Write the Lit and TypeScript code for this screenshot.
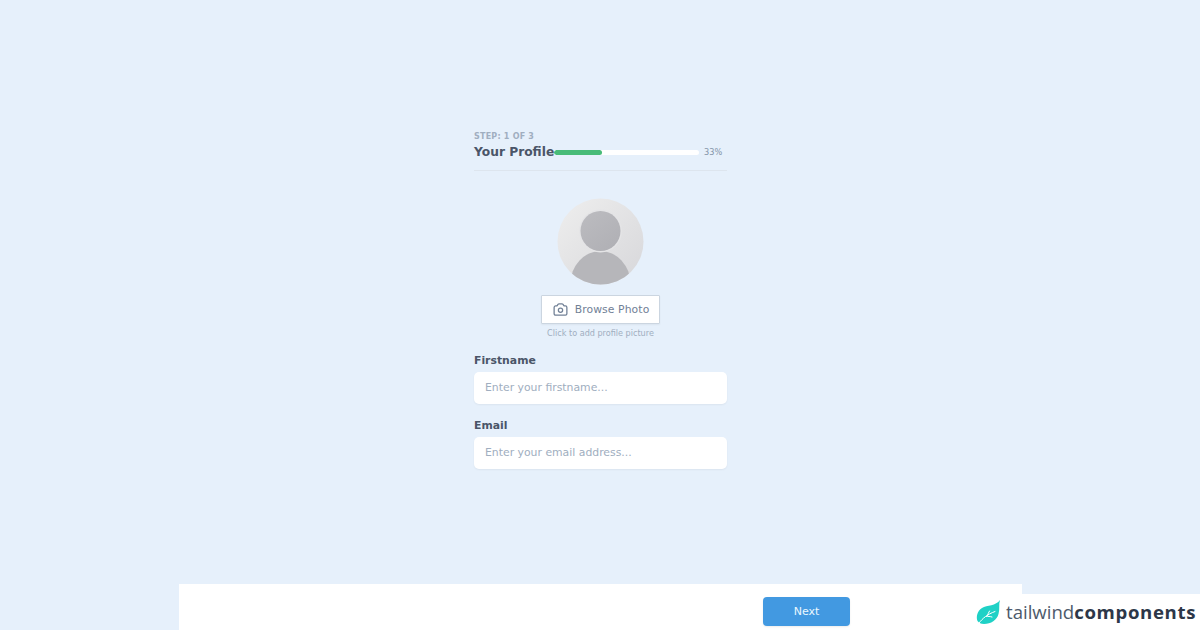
import { LitElement, html, css, svg } from "lit";
import { customElement } from "lit/decorators.js";

@customElement("app-root")
export class AppRoot extends LitElement {
  static styles = css`
    :host {
      display: block;
      width: 1200px;
      height: 630px;
      overflow: hidden;
      position: relative;
      background: #e6f0fb;
      font-family: "DejaVu Sans", sans-serif;
    }
    .page {
      width: 843px;
      height: 630px;
      margin-left: 179px;
      display: flex;
      flex-direction: column;
    }
    .main {
      flex: 1;
      width: 253px;
      margin: 0 auto;
      padding-top: 131px;
      box-sizing: border-box;
    }
    .head {
      height: 40px;
      box-sizing: border-box;
      border-bottom: 1px solid #dde5ee;
    }
    .step {
      font-size: 8px;
      line-height: 11px;
      font-weight: 700;
      letter-spacing: 0.22px;
      color: #a0aec0;
      text-transform: uppercase;
    }
    .row {
      display: flex;
      align-items: center;
      margin-top: 2px;
      height: 16px;
    }
    .title {
      font-size: 12.25px;
      line-height: 16px;
      font-weight: 700;
      color: #4a5568;
      white-space: nowrap;
      width: 80px;
    }
    .track {
      width: 145px;
      height: 5px;
      border-radius: 3px;
      background: #fff;
      overflow: hidden;
    }
    .fill {
      height: 100%;
      border-radius: 3px;
      background: #48bb78;
    }
    .pct {
      margin-left: 5px;
      font-size: 8.2px;
      color: #8494a8;
    }
    .photo {
      display: flex;
      flex-direction: column;
      align-items: center;
      margin-top: 27px;
    }
    .avatar {
      display: block;
      width: 87px;
      height: 87px;
    }
    .browse {
      box-sizing: border-box;
      width: 119px;
      height: 29px;
      margin-top: 10px;
      display: flex;
      align-items: center;
      justify-content: center;
      gap: 6px;
      background: #fff;
      border: 1px solid #cbd5e0;
      border-radius: 1px;
      box-shadow: 0 1px 2px rgba(0, 0, 0, 0.05);
      color: #718096;
      font-size: 10.8px;
      letter-spacing: 0.1px;
    }
    .browse svg {
      width: 17px;
      height: 17px;
      display: block;
    }
    .hint {
      margin-top: 3px;
      font-size: 8.1px;
      line-height: 12px;
      color: #a0aec0;
    }
    .field + .field {
      margin-top: 14px;
    }
    .photo + .field {
      margin-top: 14px;
    }
    .label {
      display: block;
      height: 15px;
      font-size: 10.85px;
      line-height: 15px;
      font-weight: 700;
      color: #4a5568;
      margin-bottom: 4px;
    }
    .input {
      display: block;
      box-sizing: border-box;
      width: 253px;
      height: 32px;
      padding: 0 11px 2px;
      border: 0;
      border-radius: 5px;
      background: #fff;
      box-shadow: 0 1px 2px rgba(0, 0, 0, 0.05);
      font: 10.85px "DejaVu Sans", sans-serif;
      color: #4a5568;
      outline: none;
    }
    .input::placeholder {
      color: #a0aec0;
      opacity: 1;
    }
    .bar {
      height: 46px;
      background: #fff;
      display: flex;
      justify-content: flex-end;
      padding: 13px 172px 0 0;
      box-sizing: border-box;
    }
    .next {
      box-sizing: border-box;
      width: 87px;
      height: 29px;
      border: 0;
      border-radius: 4px;
      background: #4299e1;
      color: #ebf8ff;
      font: 11px "DejaVu Sans", sans-serif;
      box-shadow: 0 1px 2px rgba(0, 0, 0, 0.08);
    }
    .brand {
      position: absolute;
      right: 0;
      bottom: 0;
      width: 240px;
      height: 36px;
      background: #fff;
      border-radius: 4px 0 0 0;
      display: flex;
      align-items: center;
      padding: 0 0 0 16px;
      box-sizing: border-box;
      gap: 6px;
    }
    .brand svg {
      width: 24px;
      height: 26px;
      display: block;
      flex: none;
    }
    .word {
      font-family: "Open Sans", sans-serif;
      font-size: 18.6px;
      line-height: 26px;
      color: #4d5a6b;
      white-space: nowrap;
    }
    .word b {
      font-weight: 700;
      letter-spacing: 0.65px;
      color: #2d3748;
    }
  `;

  private avatar() {
    return svg`
      <svg class="avatar" viewBox="0 0 87 87" xmlns="http://www.w3.org/2000/svg">
        <defs>
          <linearGradient id="bg" x1="0.1" y1="0.1" x2="0.9" y2="0.9">
            <stop offset="0" stop-color="#ececec"/>
            <stop offset="1" stop-color="#d9d9dc"/>
          </linearGradient>
          <linearGradient id="fg" x1="0" y1="0" x2="0.8" y2="1">
            <stop offset="0" stop-color="#bcbcc0"/>
            <stop offset="1" stop-color="#b0b0b5"/>
          </linearGradient>
          <clipPath id="c"><circle cx="43.5" cy="43.5" r="43"/></clipPath>
        </defs>
        <circle cx="43.5" cy="43.5" r="43" fill="url(#bg)"/>
        <g clip-path="url(#c)">
          <ellipse cx="43.5" cy="86" rx="30" ry="33" fill="#b6b6ba"/>
          <circle cx="43.5" cy="33" r="21.4" fill="#e4e4e6"/>
          <circle cx="43.5" cy="33" r="20" fill="url(#fg)"/>
        </g>
      </svg>`;
  }

  render() {
    return html`
      <div class="page">
        <div class="main">
          <div class="head">
            <div class="step">Step: 1 of 3</div>
            <div class="row">
              <div class="title">Your Profile</div>
              <div class="track"><div class="fill" style="width:33%"></div></div>
              <div class="pct">33%</div>
            </div>
          </div>
          <div class="photo">
            ${this.avatar()}
            <div class="browse">
              <svg viewBox="0 0 24 24" fill="none" stroke="#718096" stroke-width="1.8" stroke-linecap="round" stroke-linejoin="round">
                <path d="M3 9a2 2 0 0 1 2-2h.93a2 2 0 0 0 1.66-.89l.82-1.22A2 2 0 0 1 10.07 4h3.86a2 2 0 0 1 1.66.89l.82 1.22a2 2 0 0 0 1.66.89H19a2 2 0 0 1 2 2v9a2 2 0 0 1-2 2H5a2 2 0 0 1-2-2V9z"/>
                <circle cx="12" cy="13" r="3"/>
              </svg>
              <span>Browse Photo</span>
            </div>
            <div class="hint">Click to add profile picture</div>
          </div>
          <div class="field">
            <label class="label">Firstname</label>
            <input class="input" placeholder="Enter your firstname..." />
          </div>
          <div class="field">
            <label class="label">Email</label>
            <input class="input" placeholder="Enter your email address..." />
          </div>
        </div>
        <div class="bar"><button class="next">Next</button></div>
      </div>
      <div class="brand">
        <svg viewBox="0 0 24 26">
          <path d="M24 1C22.5 5 24 10 22.5 15C21 21 15 25 8 25C5 25 3 24 1.5 22C0 18 1 12 6 9C11 6 20 7 24 1Z" fill="#1fd1c6"/>
          <path d="M3 24C7 19 11 15.5 19 12.5M10.5 17.5C12 17.2 14 17.4 16 18M11.5 16.5C12 15 12.5 13.5 13.5 12" fill="none" stroke="#fff" stroke-width="1" stroke-linecap="round"/>
        </svg>
        <div class="word">tailwind<b>components</b></div>
      </div>
    `;
  }
}
